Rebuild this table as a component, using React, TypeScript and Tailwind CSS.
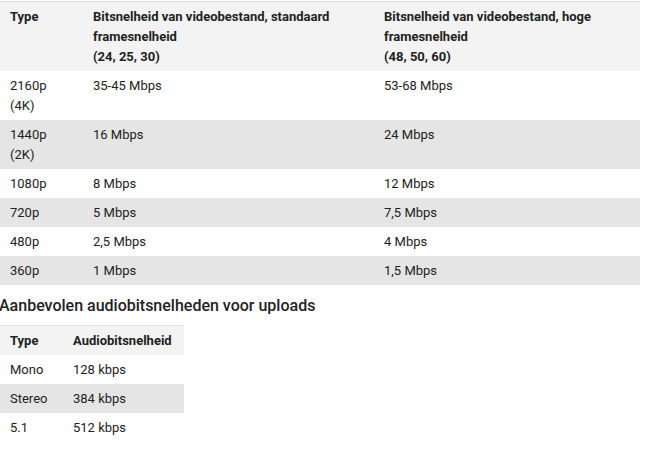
import React from 'react';

type Row = { type: string[]; std: string; high: string; shade: boolean };

const videoRows: Row[] = [
  { type: ['2160p', '(4K)'], std: '35-45 Mbps', high: '53-68 Mbps', shade: false },
  { type: ['1440p', '(2K)'], std: '16 Mbps', high: '24 Mbps', shade: true },
  { type: ['1080p'], std: '8 Mbps', high: '12 Mbps', shade: false },
  { type: ['720p'], std: '5 Mbps', high: '7,5 Mbps', shade: true },
  { type: ['480p'], std: '2,5 Mbps', high: '4 Mbps', shade: false },
  { type: ['360p'], std: '1 Mbps', high: '1,5 Mbps', shade: true },
];

const audioRows = [
  { type: 'Mono', rate: '128 kbps', shade: false },
  { type: 'Stereo', rate: '384 kbps', shade: true },
  { type: '5.1', rate: '512 kbps', shade: false },
];

const cell = 'pl-[10px] pr-2 pt-[5px] pb-[4px] align-top text-left';

const App = () => {
  return (
    <div className="w-[650px] h-[455px] overflow-hidden bg-white text-[13px] leading-[20px] text-[#222] font-['Roboto',sans-serif]">
      <table className="mt-[1px] w-[640px] border-collapse table-fixed">
        <colgroup>
          <col className="w-[83px]" />
          <col className="w-[291px]" />
          <col className="w-[266px]" />
        </colgroup>
        <thead>
          <tr className="bg-[#f3f3f3] border-t border-[#e2e2e2] font-bold">
            <th className={cell}>Type</th>
            <th className={cell}>
              Bitsnelheid van videobestand, standaard framesnelheid
              <br />
              (24, 25, 30)
            </th>
            <th className={cell}>
              Bitsnelheid van videobestand, hoge framesnelheid
              <br />
              (48, 50, 60)
            </th>
          </tr>
        </thead>
        <tbody>
          {videoRows.map((row, index) => (
            <tr key={index} className={row.shade ? 'bg-[#e5e5e5]' : 'bg-white'}>
              <td className={cell}>
                {row.type.map((t, i) => (
                  <div key={i}>{t}</div>
                ))}
              </td>
              <td className={cell}>{row.std}</td>
              <td className={cell}>{row.high}</td>
            </tr>
          ))}
        </tbody>
      </table>

      <h3 className="-ml-[1px] mt-[8px] mb-[6px] text-[16px] leading-[26px] font-medium text-[#222]">
        Aanbevolen audiobitsnelheden voor uploads
      </h3>

      <table className="w-[184px] border-collapse table-fixed">
        <colgroup>
          <col className="w-[63px]" />
          <col className="w-[121px]" />
        </colgroup>
        <thead>
          <tr className="bg-[#f3f3f3] border-t border-[#e2e2e2] font-bold">
            <th className={cell}>Type</th>
            <th className={cell}>Audiobitsnelheid</th>
          </tr>
        </thead>
        <tbody>
          {audioRows.map((row, index) => (
            <tr key={index} className={row.shade ? 'bg-[#e5e5e5]' : 'bg-white'}>
              <td className={cell}>{row.type}</td>
              <td className={cell}>{row.rate}</td>
            </tr>
          ))}
        </tbody>
      </table>
    </div>
  );
};

export default App;
